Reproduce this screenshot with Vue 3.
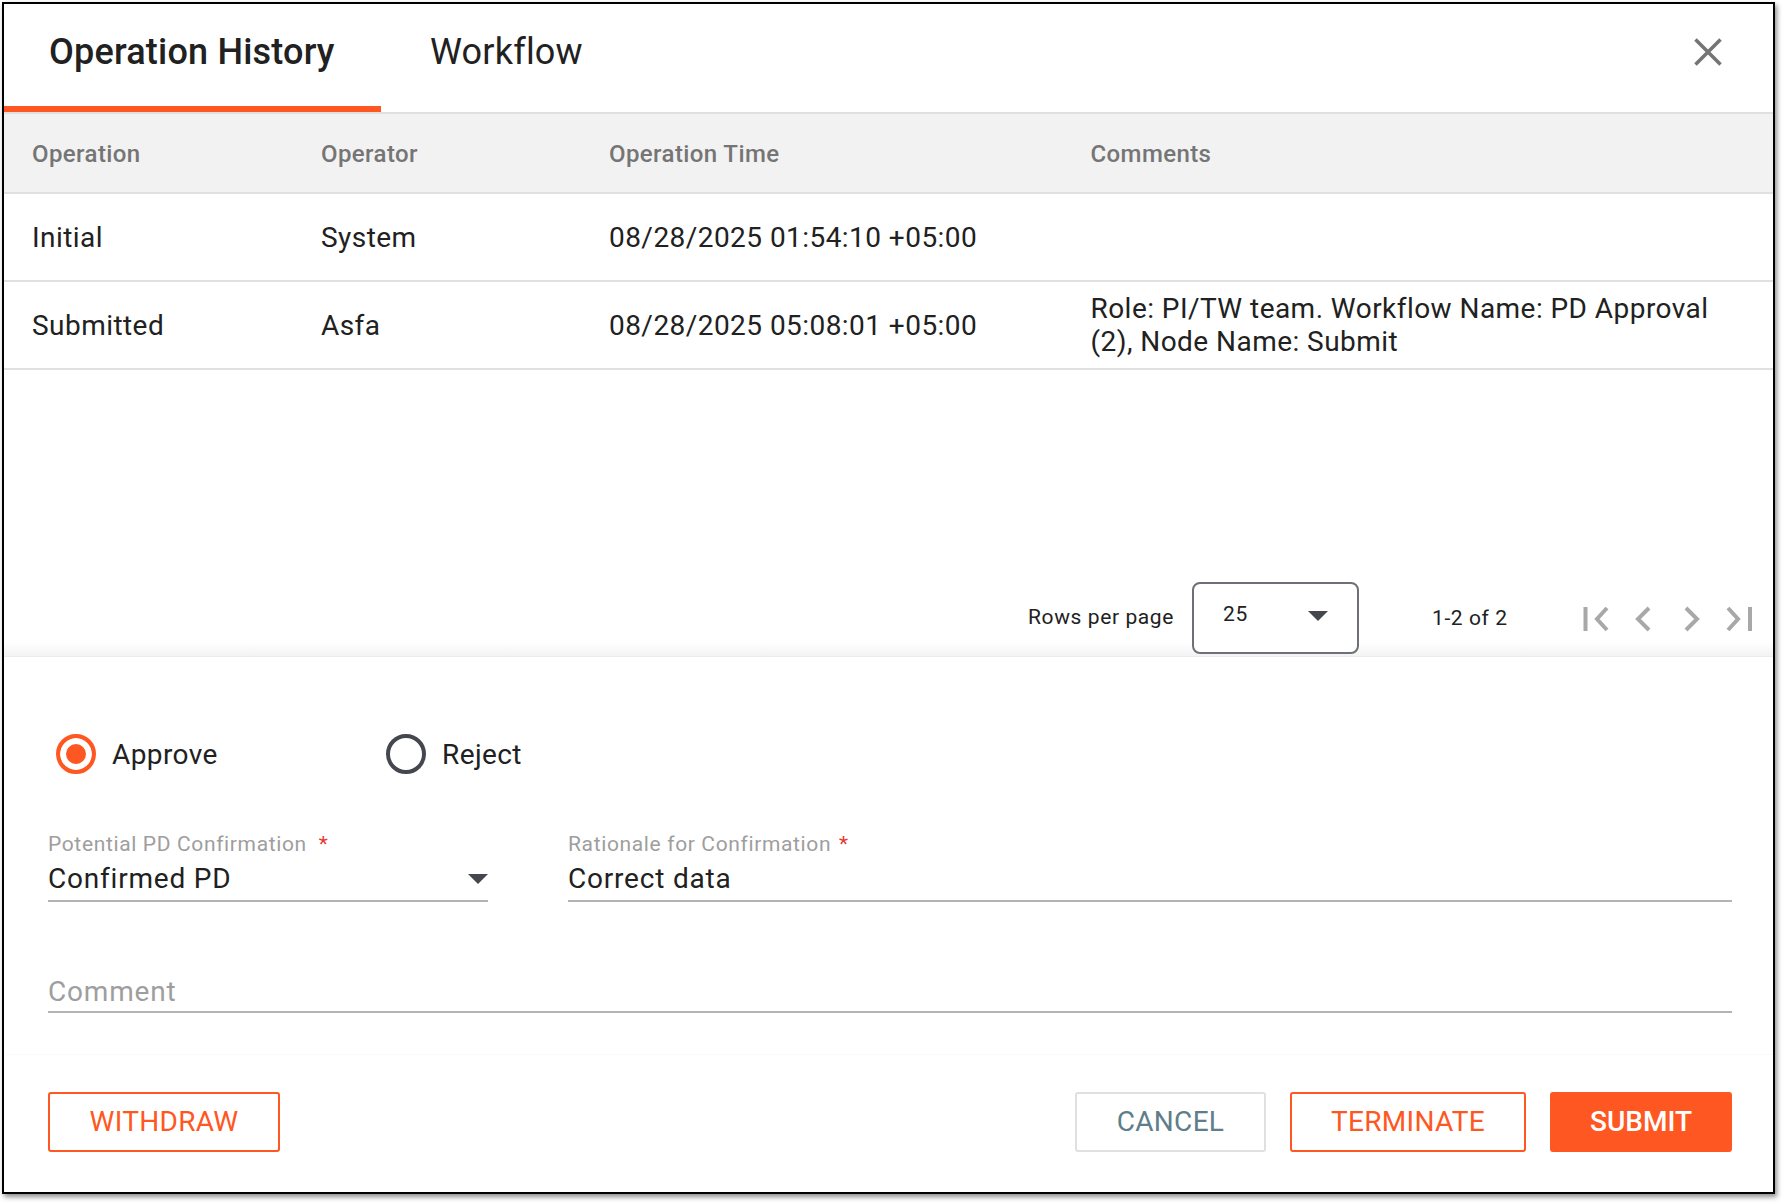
<template>
  <div class="page">
    <div class="dialog">
      <header class="tabs">
        <div class="tab active">Operation History</div>
        <div class="tab">Workflow</div>
        <button class="close" aria-label="Close">
          <svg width="28" height="28" viewBox="0 0 28 28"><path d="M1.5 1.5 26.5 26.5M26.5 1.5 1.5 26.5" /></svg>
        </button>
      </header>

      <section class="table">
        <div class="row head">
          <div v-for="h in heads" :key="h" class="cell">{{ h }}</div>
        </div>
        <div v-for="r in rows" :key="r[0]" class="row body">
          <div v-for="(c, i) in r" :key="i" class="cell">{{ c }}</div>
        </div>
      </section>

      <div class="pager">
        <span class="rpp">Rows per page</span>
        <div class="select">
          <span>25</span>
          <i class="caret"></i>
        </div>
        <span class="count">1-2 of 2</span>
        <div class="pager-icons">
          <svg width="26" height="26" viewBox="0 0 26 26"><path d="M3.5 1V25M25 2 15 13 25 24" /></svg>
          <svg class="mid" width="16" height="26" viewBox="0 0 16 26"><path d="M14 2 3 13 14 24" /></svg>
          <svg class="mid" width="16" height="26" viewBox="0 0 16 26"><path d="M2 2 13 13 2 24" /></svg>
          <svg width="26" height="26" viewBox="0 0 26 26"><path d="M2 2 12 13 2 24M24 1V25" /></svg>
        </div>
      </div>

      <form class="form">
        <div class="radios">
          <label class="radio on"><i class="disc"></i>Approve</label>
          <label class="radio"><i class="disc"></i>Reject</label>
        </div>
        <div class="fields">
          <div class="field pd">
            <div class="label">Potential PD Confirmation <b class="req">*</b></div>
            <div class="value">Confirmed PD<i class="caret"></i></div>
          </div>
          <div class="field grow">
            <div class="label">Rationale for Confirmation <b class="req">*</b></div>
            <div class="value">Correct data</div>
          </div>
        </div>
        <div class="comment">Comment</div>
      </form>

      <footer class="foot">
        <button class="btn outline">WITHDRAW</button>
        <div class="spacer"></div>
        <button class="btn ghost">CANCEL</button>
        <button class="btn outline terminate">TERMINATE</button>
        <button class="btn solid">SUBMIT</button>
      </footer>
    </div>
  </div>
</template>

<script setup>
const heads = ['Operation', 'Operator', 'Operation Time', 'Comments']
const rows = [
  ['Initial', 'System', '08/28/2025 01:54:10 +05:00', ''],
  ['Submitted', 'Asfa', '08/28/2025 05:08:01 +05:00', 'Role: PI/TW team. Workflow Name: PD Approval (2), Node Name: Submit'],
]
</script>

<style>
html, body { margin: 0; background: #fff; }
</style>

<style scoped>
.page {
  width: 1784px;
  height: 1204px;
  padding: 2px 0 0 2px;
  box-sizing: border-box;
  font-family: Roboto, "Liberation Sans", sans-serif;
  color: #212121;
  background: #fff;
}
.dialog {
  width: 1773px;
  height: 1192px;
  box-sizing: border-box;
  border: 2px solid #000;
  box-shadow: 2px 3px 5px rgba(0, 0, 0, 0.45);
  display: flex;
  flex-direction: column;
  background: #fff;
}
.tabs {
  height: 110px;
  flex: none;
  display: flex;
  box-sizing: border-box;
  border-bottom: 2px solid #e0e0e0;
  position: relative;
}
.tab {
  height: 108px;
  box-sizing: border-box;
  padding: 26px 44px 0 44px;
  font-size: 36px;
  line-height: 44px;
  letter-spacing: 0.2px;
  color: #212121;
}
.tab.active {
  width: 377px;
  padding-left: 45px;
  padding-right: 0;
  font-weight: 500;
  border-bottom: 6px solid #ff5722;
}
.tab + .tab { padding-left: 49px; }
.close {
  margin-left: auto;
  margin-right: 51px;
  align-self: flex-start;
  margin-top: 34px;
  padding: 0;
  border: 0;
  background: none;
  height: 28px;
}
.close path { stroke: #757575; stroke-width: 3.6; fill: none; }

.table { flex: none; }
.row {
  display: grid;
  grid-template-columns: 289px 288px 481.5px 1fr;
  padding-left: 28px;
  padding-right: 50px;
  border-bottom: 2px solid #e0e0e0;
  align-items: center;
}
.head {
  height: 80px;
  box-sizing: border-box;
  padding-top: 2px;
  background: #f2f2f2;
  color: #757575;
  font-size: 24px;
  font-weight: 500;
  letter-spacing: 0.4px;
}
.body {
  height: 88px;
  box-sizing: border-box;
  font-size: 28px;
  line-height: 33px;
  letter-spacing: 0.45px;
  color: #212121;
}

.pager {
  flex: none;
  height: 287px;
  box-sizing: border-box;
  padding: 0 21px 2px 0;
  display: flex;
  align-items: flex-end;
  justify-content: flex-end;
  border-bottom: 1px solid #ececec;
  background: linear-gradient(to bottom, #fff 272px, #f3f3f3 286px);
  font-size: 21px;
  letter-spacing: 0.6px;
}
.rpp { margin-bottom: 25px; margin-right: 18px; }
.select {
  width: 167px;
  height: 72px;
  box-sizing: border-box;
  border: 2px solid #6e7078;
  border-radius: 8px;
  background: #fff;
  padding: 17px 29px 0 29px;
  display: flex;
  justify-content: space-between;
  align-items: flex-start;
  line-height: 26px;
}
.caret {
  display: inline-block;
  width: 0;
  height: 0;
  border-left: 10px solid transparent;
  border-right: 10px solid transparent;
  border-top: 10px solid #45474f;
}
.select .caret { margin-top: 10px; }
.count { width: 75px; margin: 0 75px 24px 73px; white-space: nowrap; }
.pager-icons {
  display: flex;
  align-items: center;
  gap: 27px;
  margin-bottom: 22px;
}
.pager-icons svg { overflow: visible; }
.pager-icons .mid + .mid { margin-left: 6px; margin-right: -1px; }
.pager-icons path { stroke: #a8a8a8; stroke-width: 4; fill: none; }

.form {
  flex: 1;
  padding: 77px 41px 0 44px;
}
.radios { display: flex; height: 40px; }
.radio {
  display: flex;
  align-items: center;
  font-size: 28px;
  letter-spacing: 0.4px;
  margin-left: 8px;
  width: 322px;
}
.disc {
  width: 40px;
  height: 40px;
  box-sizing: border-box;
  border: 4px solid #45474f;
  border-radius: 50%;
  margin-right: 16px;
  flex: none;
}
.radio.on .disc {
  border-color: #ff5722;
  background: #ff5722;
  box-shadow: inset 0 0 0 6px #fff;
}
.fields {
  display: flex;
  gap: 80px;
  margin-top: 58px;
}
.field { border-bottom: 2px solid #b4b4b4; height: 70px; box-sizing: border-box; }
.field.pd { width: 440px; }
.field.grow { flex: 1; }
.label {
  font-size: 21px;
  line-height: 24px;
  letter-spacing: 0.64px;
  color: #9e9e9e;
  white-space: nowrap;
}
.req { color: #e53935; font-weight: 400; margin-left: 6px; }
.field.grow .req { margin-left: 2px; }
.value {
  display: flex;
  justify-content: space-between;
  align-items: center;
  font-size: 28px;
  line-height: 38px;
  letter-spacing: 0.8px;
  color: #212121;
  margin-top: 4px;
}
.comment {
  margin-top: 67px;
  height: 44px;
  line-height: 46px;
  box-sizing: border-box;
  font-size: 28px;
  letter-spacing: 0.8px;
  color: #9e9e9e;
  border-bottom: 2px solid #b4b4b4;
}

.foot {
  flex: none;
  display: flex;
  align-items: flex-start;
  height: 138px;
  box-sizing: border-box;
  padding: 37px 41px 0 44px;
  border-top: 1px solid #fafafa;
}
.spacer { flex: 1; }
.btn {
  height: 60px;
  box-sizing: border-box;
  font-family: inherit;
  font-size: 28px;
  letter-spacing: 0.3px;
  line-height: 1;
  border-radius: 3px;
  padding: 0;
  background: #fff;
}
.outline { border: 2px solid #ff5722; color: #ff5722; width: 232px; }
.ghost { border: 2px solid #e0e0e0; color: #607d8b; width: 191px; margin-right: 24px; }
.terminate { width: 236px; margin-right: 24px; }
.solid { border: 2px solid #ff5722; background: #ff5722; color: #fff; width: 182px; font-weight: 500; letter-spacing: 0; }
</style>
